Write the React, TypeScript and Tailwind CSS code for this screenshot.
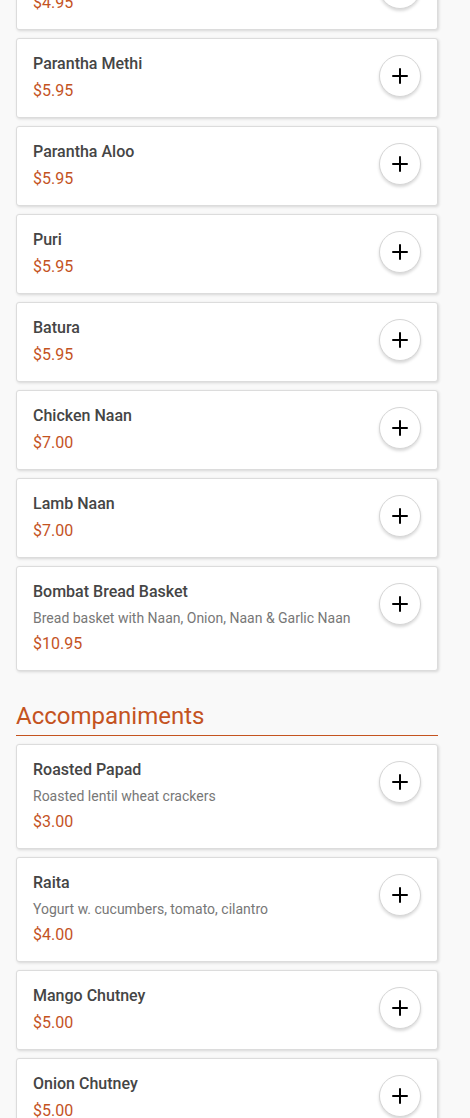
import React from 'react';
import { Plus } from 'lucide-react';

interface Item {
  name: string;
  price: string;
  desc?: string;
}

const breads: Item[] = [
  { name: 'Parantha Plain', price: '$4.95' },
  { name: 'Parantha Methi', price: '$5.95' },
  { name: 'Parantha Aloo', price: '$5.95' },
  { name: 'Puri', price: '$5.95' },
  { name: 'Batura', price: '$5.95' },
  { name: 'Chicken Naan', price: '$7.00' },
  { name: 'Lamb Naan', price: '$7.00' },
  { name: 'Bombat Bread Basket', price: '$10.95', desc: 'Bread basket with Naan, Onion, Naan & Garlic Naan' },
];

const accompaniments: Item[] = [
  { name: 'Roasted Papad', price: '$3.00', desc: 'Roasted lentil wheat crackers' },
  { name: 'Raita', price: '$4.00', desc: 'Yogurt w. cucumbers, tomato, cilantro' },
  { name: 'Mango Chutney', price: '$5.00' },
  { name: 'Onion Chutney', price: '$5.00' },
];

const MenuCard: React.FC<{ item: Item }> = ({ item }) => (
  <div className="flex items-start justify-between bg-white border border-[#dcdcdc] rounded-[3px] shadow-[1px_1px_3px_rgba(0,0,0,0.14)] pl-4 pr-4 pt-[13px] pb-[14px]">
    <div className="flex flex-col">
      <div className="text-[16px] leading-6 font-medium text-[#454545]">{item.name}</div>
      {item.desc && (
        <div className="mt-1 text-[14px] leading-5 text-[#777]">{item.desc}</div>
      )}
      <div className={item.desc ? 'mt-1 text-[16px] leading-6 text-[#c4531f]' : 'mt-[3px] text-[16px] leading-6 text-[#c4531f]'}>
        {item.price}
      </div>
    </div>
    <button className="mt-[3px] w-[42px] h-[42px] shrink-0 rounded-full bg-white border border-[#d6d6d6] shadow-[0_2px_3px_rgba(0,0,0,0.15)] flex items-center justify-center">
      <Plus className="w-6 h-6 text-black" strokeWidth={2} />
    </button>
  </div>
);

export default function App() {
  return (
    <div className="min-h-[1118px] bg-[#f9f9f9] overflow-hidden" style={{ fontFamily: 'Roboto, "Noto Sans", sans-serif' }}>
      <div className="w-[422px] ml-4 -mt-[50px] flex flex-col">
        <div className="flex flex-col gap-2">
          {breads.map((it) => (
            <MenuCard key={it.name} item={it} />
          ))}
        </div>
        <h2 className="mt-[29px] pb-[3px] text-[24px] leading-8 text-[#c4531f]">Accompaniments</h2>
        <div className="h-px bg-[#c4531f] mb-2" />
        <div className="flex flex-col gap-2">
          {accompaniments.map((it) => (
            <MenuCard key={it.name} item={it} />
          ))}
        </div>
      </div>
    </div>
  );
}
